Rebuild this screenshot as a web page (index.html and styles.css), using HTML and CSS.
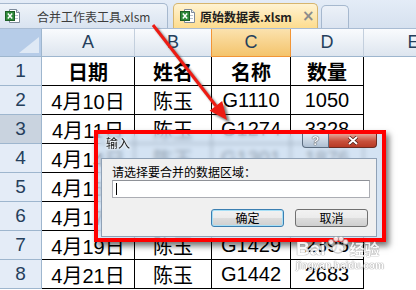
FILE: index.html
```html
<!DOCTYPE html>
<html lang="zh-CN">
<head>
    <meta charset="UTF-8">
    <title>原始数据表.xlsm</title>
    <link rel="stylesheet" href="styles.css">
</head>
<body>
<div class="screen">

    <!-- Abas dos livros -->
    <div class="tabbar">
        <div class="tab tab-idle">
            <svg class="xl-icon" width="16" height="16" viewBox="0 0 16 16">
                <path d="M4.5 1.5h7l3 3v10h-10z" fill="#fff" stroke="#7d8a9b"/>
                <path d="M11.5 1.5v3h3" fill="#e6ebf1" stroke="#7d8a9b"/>
                <line x1="7" y1="7.5" x2="13" y2="7.5" stroke="#b9c3cf"/>
                <line x1="7" y1="10.5" x2="13" y2="10.5" stroke="#b9c3cf"/>
                <rect x="0.5" y="3.5" width="9" height="9" fill="#2f8a3a" stroke="#1d5e26"/>
                <path d="M2.8 5.6l4.4 4.8M7.2 5.6l-4.4 4.8" stroke="#fff" stroke-width="1.5"/>
            </svg>
            <span class="tab-name">合并工作表工具.xlsm</span>
        </div>
        <div class="tab tab-active">
            <svg class="xl-icon" width="16" height="16" viewBox="0 0 16 16">
                <path d="M4.5 1.5h7l3 3v10h-10z" fill="#fff" stroke="#7d8a9b"/>
                <path d="M11.5 1.5v3h3" fill="#e6ebf1" stroke="#7d8a9b"/>
                <line x1="7" y1="7.5" x2="13" y2="7.5" stroke="#b9c3cf"/>
                <line x1="7" y1="10.5" x2="13" y2="10.5" stroke="#b9c3cf"/>
                <rect x="0.5" y="3.5" width="9" height="9" fill="#2f8a3a" stroke="#1d5e26"/>
                <path d="M2.8 5.6l4.4 4.8M7.2 5.6l-4.4 4.8" stroke="#fff" stroke-width="1.5"/>
            </svg>
            <span class="tab-name">原始数据表.xlsm</span>
            <span class="tab-close">×</span>
        </div>
        <div class="tab tab-new"></div>
    </div>

    <!-- Planilha -->
    <div class="sheet">
        <div class="corner"></div>
        <div class="col-head">A</div>
        <div class="col-head">B</div>
        <div class="col-head is-current">C</div>
        <div class="col-head">D</div>
        <div class="col-head">E</div>

        <div class="row-head">1</div>
        <div class="cell head-cell">日期</div>
        <div class="cell head-cell">姓名</div>
        <div class="cell head-cell">名称</div>
        <div class="cell head-cell">数量</div>
        <div class="blank"></div>

        <div class="row-head">2</div>
        <div class="cell">4月10日</div>
        <div class="cell">陈玉</div>
        <div class="cell">G1110</div>
        <div class="cell">1050</div>
        <div class="blank"></div>

        <div class="row-head is-current">3</div>
        <div class="cell">4月11日</div>
        <div class="cell">陈玉</div>
        <div class="cell">G1274</div>
        <div class="cell">3328</div>
        <div class="blank"></div>

        <!-- linhas 4 a 6 ficam atrás do diálogo -->
        <div class="row-head">4</div>
        <div class="cell">4月14日</div>
        <div class="cell">陈玉</div>
        <div class="cell">G1301</div>
        <div class="cell">1876</div>
        <div class="blank"></div>

        <div class="row-head">5</div>
        <div class="cell">4月15日</div>
        <div class="cell"></div>
        <div class="cell"></div>
        <div class="cell"></div>
        <div class="blank"></div>

        <div class="row-head">6</div>
        <div class="cell">4月17日</div>
        <div class="cell"></div>
        <div class="cell"></div>
        <div class="cell"></div>
        <div class="blank"></div>

        <div class="row-head">7</div>
        <div class="cell">4月19日</div>
        <div class="cell">陈玉</div>
        <div class="cell">G1429</div>
        <div class="cell">2395</div>
        <div class="blank"></div>

        <div class="row-head">8</div>
        <div class="cell">4月21日</div>
        <div class="cell">陈玉</div>
        <div class="cell">G1442</div>
        <div class="cell">2683</div>
        <div class="blank"></div>
    </div>

    <!-- Seta vermelha -->
    <svg class="arrow" width="416" height="290" viewBox="0 0 416 290">
        <defs>
            <filter id="soft"><feGaussianBlur stdDeviation="1.3"/></filter>
        </defs>
        <g transform="translate(3 3)" filter="url(#soft)" opacity=".6">
            <line x1="153" y1="25" x2="216" y2="106" stroke="#333" stroke-width="3"/>
            <polygon points="227,120 209.6,110.7 222.2,100.9" fill="#333"/>
        </g>
        <line x1="153" y1="25" x2="216" y2="106" stroke="#ee1b13" stroke-width="3"/>
        <polygon points="227,120 209.6,110.7 222.2,100.9" fill="#ee1b13"/>
    </svg>

    <!-- Caixa de diálogo -->
    <div class="dialog">
        <div class="dlg-window">
            <div class="dlg-title">
                <span class="dlg-caption">输入</span>
                <div class="dlg-controls">
                    <span class="ctl ctl-help">?</span>
                    <span class="ctl ctl-close">
                        <svg width="12" height="9" viewBox="0 0 12 9">
                            <path d="M2 1l8 7M10 1l-8 7" stroke="#4a1a12" stroke-width="3.4"/>
                            <path d="M2 1l8 7M10 1l-8 7" stroke="#fff" stroke-width="2"/>
                        </svg>
                    </span>
                </div>
            </div>
            <div class="dlg-body">
                <div class="dlg-label">请选择要合并的数据区域：</div>
                <div class="dlg-input"><span class="caret"></span></div>
                <div class="dlg-actions">
                    <button class="btn btn-default">确定</button>
                    <button class="btn">取消</button>
                </div>
            </div>
        </div>
    </div>

    <!-- Marca d'água -->
    <div class="watermark">
        <div class="wm-line">
            <span class="wm-brand">Bai</span>
            <svg class="wm-paw" width="22" height="18" viewBox="0 0 22 18">
                <g fill="#fff" stroke="#9a9a9a" stroke-width=".8">
                    <circle cx="4" cy="6" r="2.6"/>
                    <circle cx="9" cy="2.8" r="2.6"/>
                    <circle cx="14" cy="2.8" r="2.6"/>
                    <circle cx="18.5" cy="6" r="2.6"/>
                    <ellipse cx="11" cy="12.5" rx="6" ry="4.6"/>
                </g>
            </svg>
            <span class="wm-cn">经验</span>
        </div>
        <div class="wm-url">jingyan.baidu.com</div>
    </div>

</div>
</body>
</html>
```

FILE: styles.css
```css
* {
    margin: 0;
    padding: 0;
}

body {
    background: #fff;
    font-family: "Liberation Sans", "Noto Sans CJK SC", sans-serif;
}

.screen {
    position: relative;
    width: 416px;
    height: 290px;
    overflow: hidden;
}

/* Abas */
.tabbar {
    height: 28px;
    border-bottom: 1px solid #a9bcd3;
    background: linear-gradient(#e4ecf7, #d6e1ef);
    display: flex;
    align-items: flex-end;
}

.tab {
    box-sizing: border-box;
    height: 25px;
    display: flex;
    align-items: center;
    flex-shrink: 0;
    border: 1px solid #a6b8ce;
    border-bottom: none;
    border-radius: 5px 5px 0 0;
    font-size: 12px;
    font-family: "Noto Sans CJK SC", "Liberation Sans", sans-serif;
}

.tab-idle {
    margin-left: -6px;
    width: 174px;
    padding-left: 10px;
    background: linear-gradient(#eef3f9, #d9e3f0);
    color: #3c3c3c;
}

.tab-idle .tab-name {
    margin-left: 16px;
}

.tab-active {
    margin-left: 5px;
    width: 145px;
    padding-left: 6px;
    background: linear-gradient(#fff3d2, #fddc8e);
    border-color: #d6b56e;
    color: #1e1e1e;
    font-weight: bold;
}

.tab-active .tab-name {
    margin-left: 4px;
}

.tab-close {
    margin-left: 10px;
    color: #8c8c8c;
    font-size: 15px;
    font-family: "DejaVu Sans", sans-serif;
}

.tab-new {
    margin-left: 3px;
    width: 28px;
    height: 23px;
    background: linear-gradient(#ecf1f8, #dbe4f0);
}

/* Planilha */
.sheet {
    display: grid;
    grid-template-columns: 42px 93px 77px 79px 73px 100px;
    grid-template-rows: 28px repeat(8, 29px);
}

.corner {
    position: relative;
    background: #b6cce8;
    border-right: 1px solid #9eb6ce;
    border-bottom: 1px solid #9eb6ce;
}

.corner::after {
    content: "";
    position: absolute;
    right: 2px;
    bottom: 3px;
    width: 20px;
    height: 16px;
    background: #dfe9f5;
    clip-path: polygon(100% 0, 100% 100%, 0 100%);
}

.col-head {
    display: flex;
    align-items: center;
    justify-content: center;
    background: linear-gradient(#f9fbfd, #dde5ef);
    border-right: 1px solid #c3cfdd;
    border-bottom: 1px solid #9eb6ce;
    color: #253f5c;
    font-size: 18px;
}

.col-head.is-current {
    background: linear-gradient(#fbe2ae, #f4c46c);
    border-right-color: #f29536;
    border-bottom-color: #f29536;
    box-shadow: -1px 0 0 #f29536;
}

.row-head {
    display: flex;
    align-items: center;
    justify-content: center;
    background: #e4ecf7;
    border-right: 1px solid #9eb6ce;
    border-bottom: 1px solid #9eb6ce;
    color: #253f5c;
    font-size: 19px;
}

.row-head.is-current {
    background: #c9d3df;
}

.cell {
    display: flex;
    align-items: center;
    justify-content: center;
    border-right: 1px solid #000;
    border-bottom: 1px solid #000;
    font-size: 20px;
    color: #000;
    white-space: nowrap;
}

.head-cell {
    font-weight: bold;
}

/* Seta */
.arrow {
    position: absolute;
    left: 0;
    top: 0;
    pointer-events: none;
}

/* Diálogo */
.dialog {
    position: absolute;
    left: 94px;
    top: 130px;
    width: 292px;
    height: 112px;
    box-sizing: border-box;
    border: 4px solid #ff0000;
    box-shadow: 3px 4px 6px rgba(0, 0, 0, 0.55);
}

.dlg-window {
    height: 100%;
    box-sizing: border-box;
    display: flex;
    flex-direction: column;
    padding: 0 5px 1px 3px;
    background: rgba(196, 216, 238, 0.72);
    backdrop-filter: blur(2px);
    font-family: "Noto Sans CJK SC", "Liberation Sans", sans-serif;
    font-size: 12px;
}

.dlg-title {
    height: 24px;
    display: flex;
    align-items: flex-start;
}

.dlg-caption {
    margin: 1px 0 0 5px;
    line-height: 16px;
    color: #1b1b1b;
    text-shadow: 0 0 3px #fff, 0 0 3px #fff;
}

.dlg-controls {
    margin-left: auto;
    display: flex;
}

.ctl {
    box-sizing: border-box;
    height: 14px;
    display: flex;
    align-items: center;
    justify-content: center;
    border: 1px solid #5c6d80;
    border-top: none;
}

.ctl-help {
    width: 27px;
    border-radius: 0 0 0 4px;
    background: linear-gradient(#e2eaf3, #aebfd2);
    color: #f4f6f8;
    font: bold 13px "Liberation Sans", sans-serif;
    text-shadow: 0 0 1px #333, 0 0 1px #333;
}

.ctl-close {
    width: 48px;
    border-left: none;
    border-color: #6b2a20;
    border-radius: 0 0 4px 0;
    background: linear-gradient(#e5a597, #c8503b 55%, #b73a25);
}

.dlg-body {
    flex: 1;
    display: flex;
    flex-direction: column;
    padding: 5px 6px 0 10px;
    background: #f0f0f0;
    border: 1px solid #8fa1b6;
}

.dlg-label {
    line-height: 16px;
    color: #000;
}

.dlg-input {
    height: 18px;
    box-sizing: border-box;
    display: flex;
    align-items: center;
    padding-left: 3px;
    background: #fff;
    border: 1px solid #abadb3;
    border-top-color: #8e9197;
}

.caret {
    width: 1px;
    height: 12px;
    background: #000;
}

.dlg-actions {
    margin-top: 11px;
    margin-right: 2px;
    display: flex;
    justify-content: flex-end;
    gap: 11px;
}

.btn {
    width: 73px;
    height: 18px;
    border: 1px solid #707070;
    border-radius: 3px;
    background: linear-gradient(#f2f2f2, #ebebeb 50%, #dddddd 50%, #cfcfcf);
    font-family: "Noto Sans CJK SC", "Liberation Sans", sans-serif;
    font-size: 12px;
    line-height: 16px;
    color: #000;
}

.btn-default {
    border-color: #3c7fb1;
    box-shadow: inset 0 0 0 1px #a6dff6;
}

/* Marca d'água */
.watermark {
    position: absolute;
    left: 296px;
    top: 236px;
    opacity: 0.85;
    pointer-events: none;
}

.wm-line {
    display: flex;
    align-items: flex-end;
}

.wm-brand {
    font: bold 19px "Liberation Sans", sans-serif;
    line-height: 22px;
    color: #fff;
    text-shadow: 0 0 1px #777, 0 0 1px #777;
}

.wm-paw {
    margin: 0 1px 6px 1px;
}

.wm-cn {
    font: bold 15px "Noto Sans CJK SC", sans-serif;
    line-height: 22px;
    color: #fff;
    text-shadow: 0 0 1px #777, 0 0 1px #777;
}

.wm-url {
    font: bold 10px "Liberation Sans", sans-serif;
    color: #fff;
    text-shadow: 0 0 1px #777, 0 0 1px #777;
}
```
